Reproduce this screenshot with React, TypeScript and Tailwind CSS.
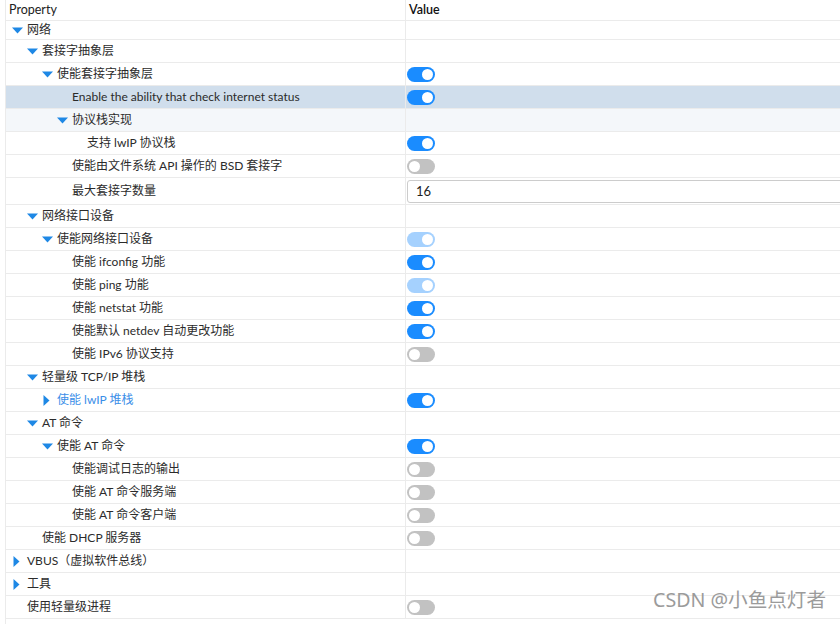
import React from "react";

type Value = "on" | "off" | "dim" | "input";

type Row = {
  label: string;
  level: number;
  arrow?: "down" | "right";
  value?: Value;
  selected?: boolean;
  tinted?: boolean;
  link?: boolean;
  tall?: boolean;
  short?: boolean;
};

const rows: Row[] = [
  { label: "网络", level: 0, arrow: "down", short: true },
  { label: "套接字抽象层", level: 1, arrow: "down" },
  { label: "使能套接字抽象层", level: 2, arrow: "down", value: "on" },
  { label: "Enable the ability that check internet status", level: 3, value: "on", selected: true },
  { label: "协议栈实现", level: 3, arrow: "down", tinted: true },
  { label: "支持 lwIP 协议栈", level: 4, value: "on" },
  { label: "使能由文件系统 API 操作的 BSD 套接字", level: 3, value: "off" },
  { label: "最大套接字数量", level: 3, value: "input", tall: true },
  { label: "网络接口设备", level: 1, arrow: "down" },
  { label: "使能网络接口设备", level: 2, arrow: "down", value: "dim" },
  { label: "使能 ifconfig 功能", level: 3, value: "on" },
  { label: "使能 ping 功能", level: 3, value: "dim" },
  { label: "使能 netstat 功能", level: 3, value: "on" },
  { label: "使能默认 netdev 自动更改功能", level: 3, value: "on" },
  { label: "使能 IPv6 协议支持", level: 3, value: "off" },
  { label: "轻量级 TCP/IP 堆栈", level: 1, arrow: "down" },
  { label: "使能 lwIP 堆栈", level: 2, arrow: "right", value: "on", link: true },
  { label: "AT 命令", level: 1, arrow: "down" },
  { label: "使能 AT 命令", level: 2, arrow: "down", value: "on" },
  { label: "使能调试日志的输出", level: 3, value: "off" },
  { label: "使能 AT 命令服务端", level: 3, value: "off" },
  { label: "使能 AT 命令客户端", level: 3, value: "off" },
  { label: "使能 DHCP 服务器", level: 1, value: "off" },
  { label: "VBUS（虚拟软件总线）", level: 0, arrow: "right" },
  { label: "工具", level: 0, arrow: "right" },
  { label: "使用轻量级进程", level: 0, value: "off" },
];

function Toggle({ state }: { state: "on" | "off" | "dim" }) {
  const track =
    state === "on" ? "bg-[#1a8cff] justify-end" : state === "dim" ? "bg-[#a5d1fe] justify-end" : "bg-[#c2c2c2] justify-start";
  return (
    <div className={`flex items-center w-[28px] h-[15px] rounded-full px-[2px] mt-[1px] ${track}`}>
      <div className="w-[11px] h-[11px] rounded-full bg-white" />
    </div>
  );
}

function Arrow({ dir }: { dir: "down" | "right" }) {
  if (dir === "down") {
    return (
      <svg width="11" height="7" viewBox="0 0 11 7" className="block">
        <path d="M0 0.5 L11 0.5 L5.5 6.5 Z" fill="#1e88e5" />
      </svg>
    );
  }
  return (
    <svg width="8" height="11" viewBox="0 0 8 11" className="block ml-[1px]">
      <path d="M0.5 0 L6.5 5.5 L0.5 11 Z" fill="#1e88e5" />
    </svg>
  );
}

function TreeRow({ row }: { row: Row }) {
  const height = row.tall ? "h-[27px]" : row.short ? "h-[19px]" : "h-[23px]";
  const bg = row.selected ? "bg-[#d0deec]" : row.tinted ? "bg-[#f4f7fa]" : "bg-white";
  const indent = 6 + row.level * 15;
  return (
    <div className={`flex ${height} border-b border-[#ebebeb] ${bg}`}>
      <div className="w-[400px] shrink-0 flex items-center border-r border-[#ebebeb]" style={{ paddingLeft: indent }}>
        <div className="w-[15px] shrink-0 flex items-center">{row.arrow && <Arrow dir={row.arrow} />}</div>
        <span className={`whitespace-nowrap ${row.link ? "text-[#3a8ee8]" : "text-[#2b2b2b]"}`}>{row.label}</span>
      </div>
      <div className="flex-1 flex items-center pl-[1px] min-w-0">
        {row.value === "input" ? (
          <div className="w-[460px] h-[23px] shrink-0 flex items-center border border-[#cccccc] rounded-[3px] bg-white pl-[8px] text-[13px] text-[#222]">
            16
          </div>
        ) : row.value ? (
          <Toggle state={row.value} />
        ) : null}
      </div>
    </div>
  );
}

export default function App() {
  return (
    <div
      className="relative w-[840px] h-[624px] overflow-hidden bg-white text-[12px] leading-none"
      style={{ fontFamily: 'Lato, "Noto Sans CJK SC", sans-serif' }}
    >
      <div className="ml-[5px] border-l border-[#ebebeb] h-full">
        <div className="flex h-[21px] border-b border-[#ebebeb]">
          <div className="w-[400px] shrink-0 flex items-center pl-[3px] border-r border-[#ebebeb] text-[#222] text-[12.5px]">Property</div>
          <div className="flex-1 flex items-center pl-[3px] text-[#111] font-semibold text-[12.5px]">Value</div>
        </div>
        {rows.map((row, i) => (
          <TreeRow key={i} row={row} />
        ))}
      </div>
      <div
        className="absolute left-[653px] top-[590px] text-[19.6px] text-[#9b9b9b] whitespace-nowrap"
        style={{ fontFamily: '"Noto Sans", "Noto Sans CJK SC", sans-serif' }}
      >
        CSDN @小鱼点灯者
      </div>
    </div>
  );
}
